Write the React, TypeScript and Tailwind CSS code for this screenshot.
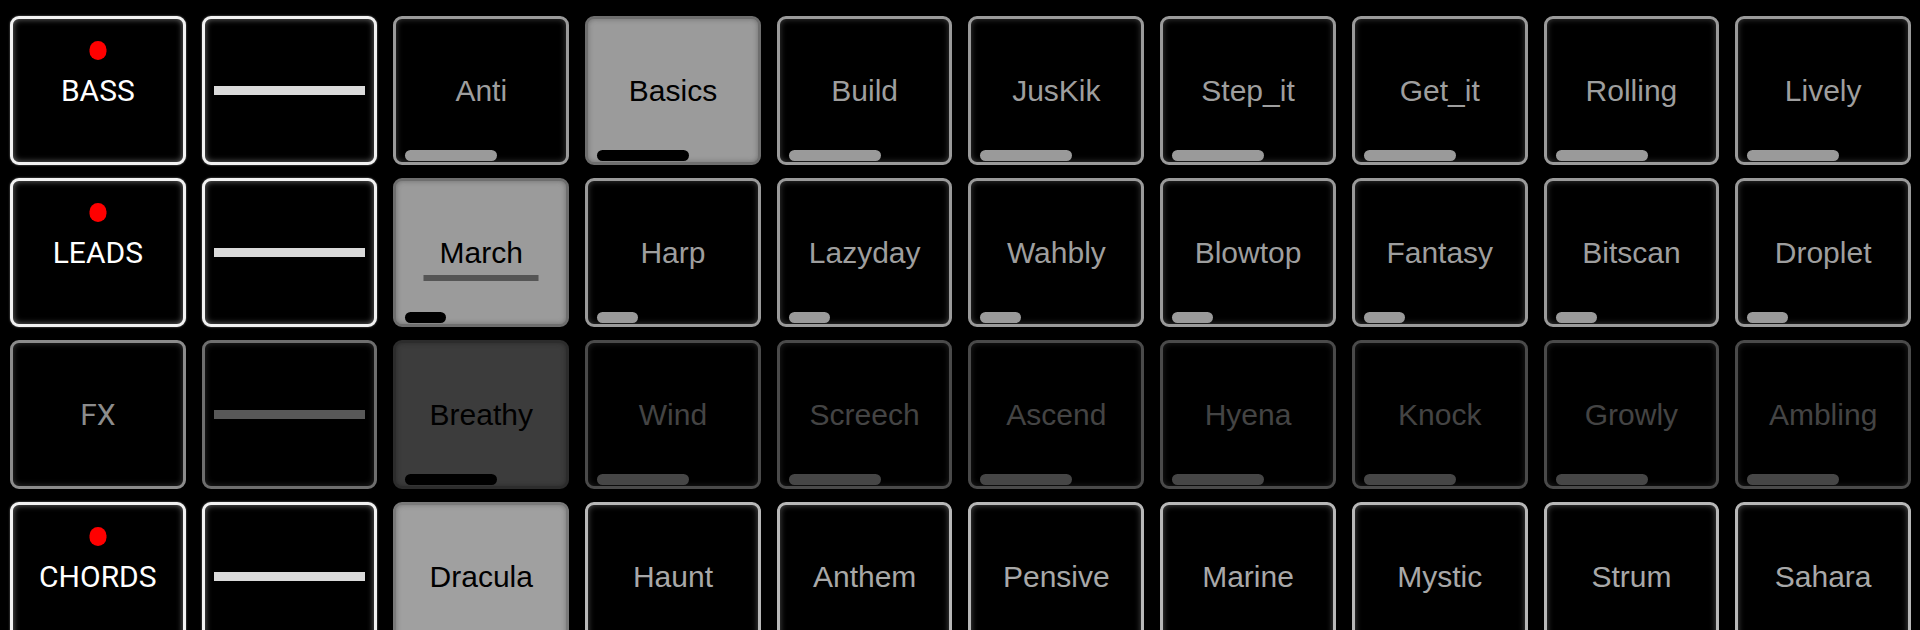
import React from 'react';

type Tone = 'on' | 'dim' | 'bright';

interface TrackRow {
  name: string;
  armed: boolean;
  tone: Tone;
  selected: number;
  barWidth: string;
  underline?: boolean;
  clips: string[];
}

const rows: TrackRow[] = [
  { name: 'BASS', armed: true, tone: 'on', selected: 1, barWidth: 'w-[92px]', clips: ['Anti', 'Basics', 'Build', 'JusKik', 'Step_it', 'Get_it', 'Rolling', 'Lively'] },
  { name: 'LEADS', armed: true, tone: 'on', selected: 0, barWidth: 'w-[41px]', underline: true, clips: ['March', 'Harp', 'Lazyday', 'Wahbly', 'Blowtop', 'Fantasy', 'Bitscan', 'Droplet'] },
  { name: 'FX', armed: false, tone: 'dim', selected: 0, barWidth: 'w-[92px]', clips: ['Breathy', 'Wind', 'Screech', 'Ascend', 'Hyena', 'Knock', 'Growly', 'Ambling'] },
  { name: 'CHORDS', armed: true, tone: 'bright', selected: 0, barWidth: 'w-[92px]', clips: ['Dracula', 'Haunt', 'Anthem', 'Pensive', 'Marine', 'Mystic', 'Strum', 'Sahara'] },
];

// full class strings per tone so tailwind picks them up
const labelStyle = {
  on: 'border-[#f2f2f2] text-white shadow-[inset_0_0_6px_rgba(255,255,255,0.45),0_0_2px_rgba(255,255,255,0.5)]',
  dim: 'border-[#8c8c8c] text-[#8c8c8c] shadow-[inset_0_0_6px_rgba(140,140,140,0.4)]',
  bright: 'border-[#f2f2f2] text-white shadow-[inset_0_0_6px_rgba(255,255,255,0.45),0_0_2px_rgba(255,255,255,0.5)]',
};

const faderCell = {
  on: 'border-[#f2f2f2] shadow-[inset_0_0_6px_rgba(255,255,255,0.45),0_0_2px_rgba(255,255,255,0.5)]',
  dim: 'border-[#6e6e6e] shadow-[inset_0_0_6px_rgba(110,110,110,0.4)]',
  bright: 'border-[#f2f2f2] shadow-[inset_0_0_6px_rgba(255,255,255,0.45),0_0_2px_rgba(255,255,255,0.5)]',
};

const faderBar = {
  on: 'bg-[#dadada]',
  dim: 'bg-[#585858]',
  bright: 'bg-[#dadada]',
};

const clipIdle = {
  on: 'bg-black border-[#9a9a9a] text-[#9e9e9e] shadow-[inset_0_0_6px_rgba(154,154,154,0.4)]',
  dim: 'bg-black border-[#4a4a4a] text-[#444444] shadow-[inset_0_0_6px_rgba(80,80,80,0.4)]',
  bright: 'bg-black border-[#b8b8b8] text-[#a8a8a8] shadow-[inset_0_0_6px_rgba(184,184,184,0.45)]',
};

const clipIdleBar = {
  on: 'bg-[#9a9a9a]',
  dim: 'bg-[#464646]',
  bright: 'bg-[#a6a6a6]',
};

const clipSelected = {
  on: 'bg-[#9b9b9b] border-[#6e6e6e] text-black shadow-[inset_0_0_5px_rgba(80,80,80,0.6)]',
  dim: 'bg-[#3c3c3c] border-[#2c2c2c] text-black shadow-[inset_0_0_5px_rgba(30,30,30,0.6)]',
  bright: 'bg-[#a0a0a0] border-[#7a7a7a] text-black shadow-[inset_0_0_5px_rgba(90,90,90,0.6)]',
};

const LabelCell: React.FC<{ row: TrackRow }> = ({ row }) => (
  <div className={`relative flex items-center justify-center rounded-[9px] border-[3px] bg-black ${labelStyle[row.tone]}`}>
    {row.armed && (
      <div className="absolute left-1/2 top-[22px] h-[19px] w-[17px] -translate-x-1/2 rounded-full bg-[#ff0000]" />
    )}
    <span className="font-['Roboto',sans-serif] text-[30px] leading-none">{row.name}</span>
  </div>
);

const FaderCell: React.FC<{ row: TrackRow }> = ({ row }) => (
  <div className={`flex items-center rounded-[9px] border-[3px] bg-black px-[9px] ${faderCell[row.tone]}`}>
    <div className={`h-[9px] w-full ${faderBar[row.tone]}`} />
  </div>
);

const ClipCell: React.FC<{ row: TrackRow; name: string; selected: boolean }> = ({ row, name, selected }) => (
  <div
    className={`relative flex items-center justify-center rounded-[9px] border-[3px] ${
      selected ? clipSelected[row.tone] : clipIdle[row.tone]
    }`}
  >
    <span className="font-['Liberation_Sans',Arial,sans-serif] text-[30px] leading-none">{name}</span>
    {selected && row.underline && (
      <div className="absolute left-1/2 top-[94px] h-[6px] w-[115px] -translate-x-1/2 bg-[#555555]" />
    )}
    <div
      className={`absolute bottom-[1px] left-[9px] h-[11px] rounded-full ${row.barWidth} ${
        selected ? 'bg-black' : clipIdleBar[row.tone]
      }`}
    />
  </div>
);

export default function App() {
  return (
    <div className="h-[630px] w-[1920px] overflow-hidden bg-black pl-[10px] pr-[9px] pt-[16px]">
      <div className="grid grid-cols-10 auto-rows-[149px] gap-x-[16px] gap-y-[13px]">
        {rows.map((row) => (
          <React.Fragment key={row.name}>
            <LabelCell row={row} />
            <FaderCell row={row} />
            {row.clips.map((clip, i) => (
              <ClipCell key={clip} row={row} name={clip} selected={i === row.selected} />
            ))}
          </React.Fragment>
        ))}
      </div>
    </div>
  );
}
